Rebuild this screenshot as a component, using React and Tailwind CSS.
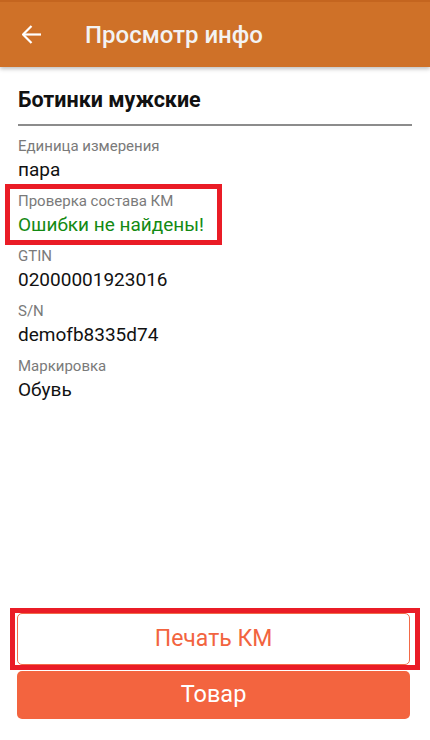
export default function App() {
  const fields = [
    { label: "Единица измерения", value: "пара" },
    { label: "Проверка состава КМ", value: "Ошибки не найдены!", ok: true },
    { label: "GTIN", value: "02000001923016" },
    { label: "S/N", value: "demofb8335d74" },
    { label: "Маркировка", value: "Обувь" },
  ];

  return (
    <div
      className="flex flex-col h-[740px] w-[430px] bg-white overflow-hidden"
      style={{ fontFamily: "Roboto, 'Noto Sans', sans-serif" }}
    >
      {/* header */}
      <div className="relative z-10 h-[67px] shrink-0 bg-[#cf7128] border-t-2 border-[#c4651f] shadow-[0_2px_4px_rgba(0,0,0,0.25)] flex items-center">
        <svg width="19" height="19" viewBox="0 0 19 19" className="ml-[22px]" fill="none" stroke="#ffffff" strokeWidth="2.2">
          <path d="M19 9.5H1.5" />
          <path d="M9.5 1L1 9.5L9.5 18" />
        </svg>
        <span className="ml-[44px] text-[24px] font-medium text-[#f3f3f3] leading-none">Просмотр инфо</span>
      </div>

      {/* content */}
      <div className="flex-1 px-[18px]">
        <h1 className="pt-[19px] text-[21.5px] font-bold leading-[28px] text-[#111]">Ботинки мужские</h1>
        <div className="mt-[10px] h-[2px] w-[394px] bg-[#8c8c8c]" />

        <div className="mt-[11px] flex flex-col gap-[10px]">
          {fields.map((f) =>
            f.ok ? (
              <div
                key={f.label}
                className="-ml-[13px] -my-[8px] w-fit border-[5px] border-[#ea1c26] pl-[8px] pr-[13px] py-[3px]"
              >
                <div className="text-[15px] leading-[18px] text-[#7a7a7a]">{f.label}</div>
                <div className="mt-[3px] text-[19px] leading-[24px] text-[#138a13]">{f.value}</div>
              </div>
            ) : (
              <div key={f.label}>
                <div className="text-[15px] leading-[18px] text-[#7a7a7a]">{f.label}</div>
                <div className="mt-[3px] text-[19px] leading-[24px] text-[#111]">{f.value}</div>
              </div>
            )
          )}
        </div>
      </div>

      {/* buttons */}
      <div className="shrink-0 pb-[21px]">
        <div className="mx-[10px] border-[5px] border-[#ea1c26] px-[2px]">
          <button className="h-[52px] w-[393px] rounded-[5px] border border-[#f26a48] bg-white text-[23px] text-[#f26440]">
            Печать КМ
          </button>
        </div>
        <button className="mt-[1px] mx-[17px] h-[48px] w-[393px] rounded-[5px] bg-[#f3643f] text-[23.5px] text-white">
          Товар
        </button>
      </div>
    </div>
  );
}
